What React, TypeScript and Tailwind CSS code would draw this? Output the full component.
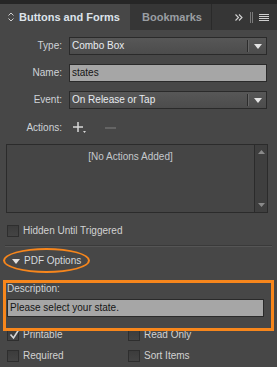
import type { ReactNode } from 'react';

const font = { fontFamily: '"Liberation Sans", Arial, sans-serif' };

function Checkbox({ checked = false }: { checked?: boolean }) {
  return (
    <span className="relative block w-[12px] h-[12px] shrink-0 border border-[#2e2e2e] bg-gradient-to-b from-[#3c3c3c] to-[#444444]">
      {checked && (
        <svg className="absolute left-[1px] top-[-3px]" width="12" height="13" viewBox="0 0 12 13">
          <path d="M1.5 7.5 L4.5 11 L10.5 1.5" fill="none" stroke="#d6d6d6" strokeWidth="1.6" />
        </svg>
      )}
    </span>
  );
}

function CheckRow({ label, checked }: { label: string; checked?: boolean }) {
  return (
    <div className="flex items-center gap-[4px] h-[12px]">
      <Checkbox checked={checked} />
      <span className="text-[10px] text-[#d2d2d2] leading-none">{label}</span>
    </div>
  );
}

function FieldRow({ label, children, className = '' }: { label: string; children: ReactNode; className?: string }) {
  return (
    <div className={`flex items-center ${className}`}>
      <span className="w-[62px] text-right text-[10px] text-[#cfd3d8] leading-none">{label}</span>
      <div className="ml-[7px] w-[198px] h-full">{children}</div>
    </div>
  );
}

function Select({ value }: { value: string }) {
  return (
    <div className="flex h-full border border-[#2a2a2a] bg-gradient-to-b from-[#575757] to-[#4c4c4c]">
      <span className="flex-1 flex items-center pl-[2px] text-[10px] text-[#e8ecf0] leading-none">{value}</span>
      <span className="w-px bg-[#2c2c2c] my-[2px]" />
      <span className="w-px bg-[#666666] my-[2px]" />
      <span className="w-[17px] flex items-center justify-center">
        <svg width="8" height="5" viewBox="0 0 8 5">
          <path d="M0 0 H8 L4 5 Z" fill="#e4e4e4" />
        </svg>
      </span>
    </div>
  );
}

export default function App() {
  return (
    <div className="relative w-[277px] h-[367px] bg-[#474747] overflow-hidden" style={font}>
      {/* tab strip */}
      <div className="h-[4px] bg-[#262626]" />
      <div className="flex h-[26px] bg-[#363636]">
        <div className="w-[130px] bg-[#474747] flex items-center pl-[8px] gap-[5px]">
          <svg width="6" height="10" viewBox="0 0 6 10">
            <path d="M0.5 3.5 L3 1 L5.5 3.5 M0.5 6.5 L3 9 L5.5 6.5" fill="none" stroke="#cfcfcf" strokeWidth="1" />
          </svg>
          <span className="text-[11px] font-bold text-[#dde3ea] leading-none">Buttons and Forms</span>
        </div>
        <div className="w-[82px] flex items-center pl-[12px] border-r border-[#2a2a2a]">
          <span className="text-[11px] font-bold text-[#9a9ea3] leading-none">Bookmarks</span>
        </div>
        <div className="flex-1 flex items-center pl-[23px]">
          <svg width="8" height="7" viewBox="0 0 8 7">
            <path d="M0.5 0.5 L3.5 3.5 L0.5 6.5 M4 0.5 L7 3.5 L4 6.5" fill="none" stroke="#d4d4d4" strokeWidth="1.1" />
          </svg>
          <span className="ml-[7px] w-px h-[11px] bg-[#7a7a7a]" />
          <span className="ml-px w-px h-[11px] bg-[#7a7a7a]" />
          <span className="ml-[6px] flex flex-col gap-px">
            <span className="block w-[10px] h-px bg-[#d0d0d0]" />
            <span className="block w-[10px] h-px bg-[#d0d0d0]" />
            <span className="block w-[10px] h-px bg-[#d0d0d0]" />
            <span className="block w-[10px] h-px bg-[#d0d0d0]" />
          </span>
        </div>
      </div>

      {/* form */}
      <div className="flex flex-col">
        <FieldRow label="Type:" className="mt-[7px] h-[18px]">
          <Select value="Combo Box" />
        </FieldRow>
        <FieldRow label="Name:" className="mt-[9px] h-[18px]">
          <div className="h-full border border-[#2a2a2a] bg-[#a6a6a6] flex items-center pl-[2px] text-[10px] text-[#151515] leading-none">
            states
          </div>
        </FieldRow>
        <FieldRow label="Event:" className="mt-[9px] h-[18px]">
          <Select value="On Release or Tap" />
        </FieldRow>
        <FieldRow label="Actions:" className="mt-[11px] h-[16px]">
          <div className="flex items-center h-full pl-[4px] gap-[19px]">
            <svg width="13" height="12" viewBox="0 0 13 12">
              <path d="M5 0 V10 M0 5 H10" stroke="#d8d8d8" strokeWidth="1.5" />
              <path d="M10 9 H13 L11.5 11 Z" fill="#d8d8d8" />
            </svg>
            <svg width="11" height="10" viewBox="0 0 11 10">
              <path d="M0 5 H11" stroke="#6e6e6e" strokeWidth="1.5" />
            </svg>
          </div>
        </FieldRow>

        {/* actions list */}
        <div className="mt-[8px] mx-[6px] w-[262px] h-[69px] border border-[#2b2b2b] bg-[#454545] flex">
          <div className="flex-1 flex justify-center pt-[7px]">
            <span className="text-[10px] text-[#c4c8cc] leading-none">[No Actions Added]</span>
          </div>
          <div className="w-[13px] border-l border-[#2b2b2b] bg-[#3f3f3f] flex flex-col items-center justify-between py-[5px]">
            <svg width="7" height="4" viewBox="0 0 7 4">
              <path d="M0 4 H7 L3.5 0 Z" fill="#8a8a8a" />
            </svg>
            <svg width="7" height="4" viewBox="0 0 7 4">
              <path d="M0 0 H7 L3.5 4 Z" fill="#8a8a8a" />
            </svg>
          </div>
        </div>

        <div className="mt-[12px] pl-[7px]">
          <CheckRow label="Hidden Until Triggered" />
        </div>

        <div className="mt-[8px] mx-[5px] h-px bg-[#3a3a3a] shadow-[0_1px_0_#555555]" />

        <div className="mt-[8px] h-[14px] pl-[12px] flex items-center gap-[4px]">
          <svg width="8" height="5" viewBox="0 0 8 5">
            <path d="M0 0 H8 L4 5 Z" fill="#e0e0e0" />
          </svg>
          <span className="text-[10px] text-[#d6dade] leading-none">PDF Options</span>
        </div>

        <div className="mt-[15px] h-[12px] pl-[7px] flex items-center">
          <span className="text-[10px] text-[#d0d4d8] leading-none">Description:</span>
        </div>
        <div className="mt-[4px] mx-[7px] w-[257px] h-[18px] border border-[#2a2a2a] bg-[#a6a6a6] flex items-center pl-[2px] text-[10px] text-[#151515] leading-none">
          Please select your state.
        </div>

        <div className="mt-[12px] grid grid-cols-[121px_1fr] pl-[7px] gap-y-[9px]">
          <CheckRow label="Printable" checked />
          <CheckRow label="Read Only" />
          <CheckRow label="Required" />
          <CheckRow label="Sort Items" />
        </div>
      </div>

      {/* orange annotations */}
      <div className="absolute left-[3px] top-[248px] w-[87px] h-[25px] rounded-[50%] border-[2.5px] border-[#f7861c]" />
      <div className="absolute left-[3px] top-[280px] w-[271px] h-[51px] border-[3px] border-[#f7861c]" />
    </div>
  );
}
